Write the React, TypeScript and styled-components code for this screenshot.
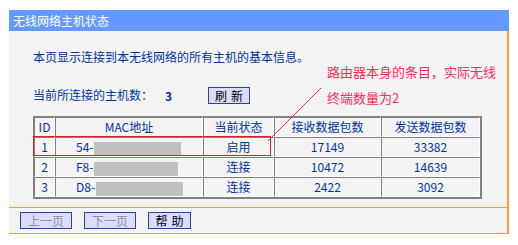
import React from 'react'
import styled, { createGlobalStyle } from 'styled-components'

const GlobalStyle = createGlobalStyle`
  html, body {
    margin: 0;
    padding: 0;
    background: #ffffff;
  }
  body {
    font-family: "Noto Sans CJK SC", "DejaVu Sans", sans-serif;
  }
`

const Panel = styled.div`
  margin: 10px 0 0 9px;
  width: 500px;
`

const TitleBar = styled.div`
  height: 21px;
  background: #6699ff;
  color: #ffffff;
  font-size: 12px;
  line-height: 21px;
  padding-left: 4px;
`

const Body = styled.div`
  position: relative;
  background: #f4f4f4;
  border-right: 2px solid #ff9933;
  padding: 17px 0 8px 24px;
  box-sizing: border-box;
  width: 500px;
`

const Text = styled.div`
  color: #0033a0;
  font-size: 12px;
  line-height: 18px;
`

const CountRow = styled.div`
  display: flex;
  align-items: center;
  margin-top: 20px;
  height: 18px;
`

const Count = styled.span`
  color: #0033a0;
  font-size: 12px;
  font-weight: bold;
  margin-left: 12px;
  width: 43px;
`

const Button = styled.button<{ $disabled?: boolean; $width: number; $spaced?: boolean }>`
  height: 17px;
  padding: 0;
  width: ${p => p.$width}px;
  background: #dcdcff;
  border: 1px solid #2244aa;
  color: ${p => (p.$disabled ? '#909090' : '#000000')};
  font-family: inherit;
  font-size: 12px;
  line-height: 15px;
  box-sizing: border-box;
  letter-spacing: ${p => (p.$spaced ? '4px' : '0')};
  text-indent: ${p => (p.$spaced ? '4px' : '0')};
`

const Table = styled.table`
  margin-top: 12px;
  width: 449px;
  border-collapse: separate;
  border-spacing: 0;
  border-style: solid;
  border-color: #808080;
  border-width: 1px 2px 2px 1px;
  font-size: 12px;
  color: #0033a0;
`

const Cell = styled.td<{ $align?: string; $pad?: number }>`
  height: 18px;
  padding: 0 0 0 ${p => p.$pad ?? 0}px;
  text-align: ${p => p.$align ?? 'center'};
  border-style: solid;
  border-width: 1px;
  border-color: #808080 #ffffff #ffffff #808080;
  line-height: 18px;
  white-space: nowrap;
`

const Mask = styled.span<{ $w: number }>`
  display: inline-block;
  vertical-align: middle;
  width: ${p => p.$w}px;
  height: 14px;
  background: #c0c0c0;
  margin-left: 1px;
`

const Note = styled.div`
  position: absolute;
  left: 318px;
  top: 28px;
  color: #ff2a55;
  font-size: 13px;
  line-height: 26px;
`

const Highlight = styled.div`
  position: absolute;
  left: 24px;
  top: 105px;
  width: 236px;
  height: 18px;
  border: 1px solid #e02020;
`

const Pointer = styled.svg`
  position: absolute;
  left: 257px;
  top: 56px;
`

const Footer = styled.div`
  display: flex;
  gap: 12px;
  align-items: center;
  height: 25px;
  padding-left: 11px;
  background: #f4f4f4;
  border-top: 1px solid #ff9933;
  border-bottom: 1px solid #ff9933;
  border-right: 2px solid #ff9933;
  box-sizing: content-box;
  width: 487px;
`

const rows = [
  { id: 1, prefix: '54-', mask: 87, status: '启用', rx: '17149', tx: '33382' },
  { id: 2, prefix: 'F8-', mask: 84, status: '连接', rx: '10472', tx: '14639' },
  { id: 3, prefix: 'D8-', mask: 87, status: '连接', rx: '2422', tx: '3092' },
]

export default function App() {
  return (
    <>
      <GlobalStyle />
      <Panel>
        <TitleBar>无线网络主机状态</TitleBar>
        <Body>
          <Text>本页显示连接到本无线网络的所有主机的基本信息。</Text>
          <CountRow>
            <Text>当前所连接的主机数：</Text>
            <Count>3</Count>
            <Button $width={42} $spaced>刷新</Button>
          </CountRow>
          <Table>
            <tbody>
              <tr>
                <Cell style={{ width: 19 }}>ID</Cell>
                <Cell style={{ width: 146 }}>MAC地址</Cell>
                <Cell style={{ width: 69 }}>当前状态</Cell>
                <Cell style={{ width: 105 }}>接收数据包数</Cell>
                <Cell>发送数据包数</Cell>
              </tr>
              {rows.map(r => (
                <tr key={r.id}>
                  <Cell>{r.id}</Cell>
                  <Cell $align="left" $pad={20}>
                    {r.prefix}
                    <Mask $w={r.mask} />
                  </Cell>
                  <Cell>{r.status}</Cell>
                  <Cell>{r.rx}</Cell>
                  <Cell>{r.tx}</Cell>
                </tr>
              ))}
            </tbody>
          </Table>
          <Highlight />
          <Pointer width="60" height="60" viewBox="0 0 60 60">
            <line x1="2" y1="54" x2="55" y2="1" stroke="#ff2a55" strokeWidth="1" />
          </Pointer>
          <Note>
            路由器本身的条目，实际无线
            <br />
            终端数量为2
          </Note>
        </Body>
        <Footer>
          <Button $width={52} $disabled>上一页</Button>
          <Button $width={52} $disabled>下一页</Button>
          <Button $width={43} $spaced>帮助</Button>
        </Footer>
      </Panel>
    </>
  )
}
